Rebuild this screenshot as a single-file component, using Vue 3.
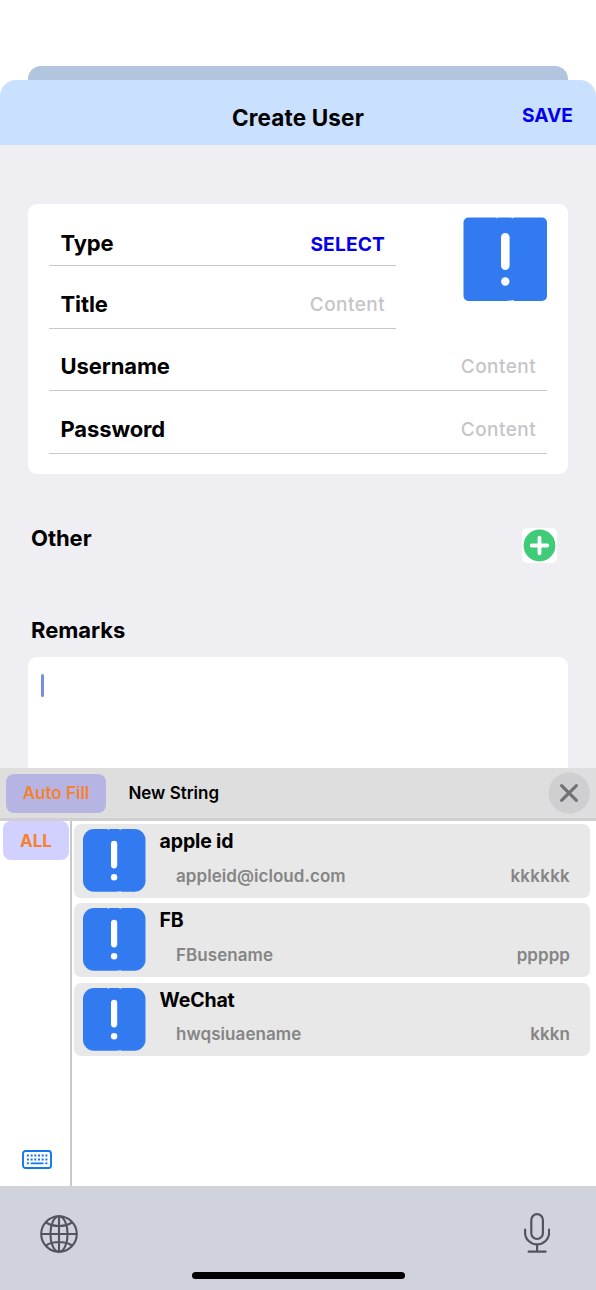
<script setup>
const shortRows = [
  { label: 'Type', value: 'SELECT', kind: 'select', cls: 'l-type' },
  { label: 'Title', value: 'Content', kind: 'hint', cls: 'l-title' },
]
const longRows = [
  { label: 'Username', value: 'Content', kind: 'hint', cls: 'l-user' },
  { label: 'Password', value: 'Content', kind: 'hint', cls: 'l-pass' },
]
const accounts = [
  { name: 'apple id', user: 'appleid@icloud.com', pass: 'kkkkkk' },
  { name: 'FB', user: 'FBusename', pass: 'ppppp' },
  { name: 'WeChat', user: 'hwqsiuaename', pass: 'kkkn' },
]
const keyCols = [0, 1, 2, 3, 4, 5]
</script>

<template>
  <div class="screen">
    <div class="back-sheet"></div>
    <header class="bar">
      <span class="side"></span>
      <h1>Create User</h1>
      <button class="save">SAVE</button>
    </header>

    <main class="form">
      <section class="card">
        <div class="top">
          <div class="short">
            <div v-for="r in shortRows" :key="r.label" class="row">
              <span class="label" :class="r.cls">{{ r.label }}</span>
              <span :class="r.kind">{{ r.value }}</span>
            </div>
          </div>
          <svg class="type-icon" viewBox="0 0 84 84">
            <rect x=".5" y=".5" width="83.5" height="83.5" rx="5" fill="#327af0" />
            <rect x="38" y="15.9" width="8.6" height="37" rx="4.3" fill="#fff" />
            <circle cx="42.3" cy="64.5" r="4.2" fill="#fff" />
            <path d="M32.5 0h2.5l-1 1.6zM47.5 0h4l-1.5 1.4zM43 84l8-1v1z" fill="#dbe8fd" />
          </svg>
        </div>
        <div v-for="r in longRows" :key="r.label" class="row">
          <span class="label" :class="r.cls">{{ r.label }}</span>
          <span :class="r.kind">{{ r.value }}</span>
        </div>
      </section>

      <div class="other">
        <h2 class="h-other">Other</h2>
        <svg class="add" viewBox="0 0 35 35">
          <rect width="35" height="35" rx="5" fill="#fff" />
          <circle cx="17.5" cy="17.5" r="15.9" fill="#3fcb77" />
          <path d="M17.5 9.7v15.6M9.7 17.5h15.6" stroke="#fff" stroke-width="3.8" stroke-linecap="round" />
        </svg>
      </div>
      <h2 class="h-remarks">Remarks</h2>
      <div class="remarks"><span class="caret"></span></div>
    </main>

    <nav class="tabs">
      <button class="tab active">Auto Fill</button>
      <button class="tab">New String</button>
      <svg class="close" viewBox="0 0 42 42">
        <circle cx="21.2" cy="21" r="20.7" fill="#cfcfd2" />
        <path d="M13.6 13.6l14.8 14.8M28.4 13.6L13.6 28.4" stroke="#717175" stroke-width="3.1" stroke-linecap="round" />
      </svg>
    </nav>

    <div class="panel">
      <aside class="rail">
        <button class="all">ALL</button>
        <svg class="keys" viewBox="0 0 30 19">
          <rect x="1" y="1" width="28" height="17" rx="2.6" fill="none" stroke="#1377ec" stroke-width="1.9" />
          <g fill="#1377ec">
            <rect v-for="c in keyCols" :key="'a' + c" :x="4.9 + c * 3.7" y="4.5" width="2" height="2" />
            <rect v-for="c in keyCols" :key="'b' + c" :x="4.9 + c * 3.7" y="8.5" width="2" height="2" />
            <rect x="4.9" y="12.3" width="2" height="2" />
            <rect x="8.6" y="12.4" width="13" height="1.9" rx=".6" />
            <rect x="23.4" y="12.3" width="2" height="2" />
          </g>
        </svg>
      </aside>
      <div class="list">
        <article v-for="(a, i) in accounts" :key="a.name" class="item">
          <svg class="item-icon" viewBox="0 0 63 63">
            <rect width="62.5" height="62.7" rx="11" fill="#327af0" />
            <rect x="28" y="11.8" width="6.2" height="27.6" rx="3.1" fill="#fff" />
            <circle cx="31.1" cy="48.2" r="3.2" fill="#fff" />
            <path d="M24.4 0h2l-.8 1.2zM35.6 0h3l-1.1 1zM33 63l5-1v1z" fill="#c6d9f8" />
          </svg>
          <div class="info">
            <div class="name" :class="'n' + i">{{ a.name }}</div>
            <div class="cred">
              <span :class="'u' + i">{{ a.user }}</span>
              <span :class="'p' + i">{{ a.pass }}</span>
            </div>
          </div>
        </article>
      </div>
    </div>

    <footer class="dock">
      <div class="dock-icons">
        <svg class="globe" viewBox="0 0 38 38" fill="none" stroke="#50555c" stroke-width="2.1">
          <circle cx="19" cy="19" r="17.8" />
          <ellipse cx="19" cy="19" rx="8.6" ry="17.8" />
          <path d="M19 1.2v35.6M1.2 19h35.6M6 7.5c7 4.6 19 4.6 26 0M6 30.5c7-4.6 19-4.6 26 0" />
        </svg>
        <svg class="mic" viewBox="0 0 26 40" fill="none" stroke="#50555c" stroke-width="2.2" stroke-linecap="round">
          <rect x="7.3" y="1.2" width="11.6" height="24.8" rx="5.8" />
          <path d="M1.1 16.5v3.2c0 6.6 5.4 11.6 12 11.6s12-5 12-11.6v-3.2M13.1 31.3v7.2M4.6 38.6h17" />
        </svg>
      </div>
      <div class="home"></div>
    </footer>
  </div>
</template>

<style>
body { margin: 0; background: #fff; }
</style>

<style scoped>
* { box-sizing: border-box; }
.screen {
  width: 596px; height: 1290px; overflow: hidden; background: #fff; color: #000;
  font-family: Inter, "Liberation Sans", sans-serif; display: flex; flex-direction: column;
  padding-top: 66px;
}
h1, h2 { margin: 0; }
button { border: 0; margin: 0; padding: 0; background: none; font-family: inherit; color: inherit; }
span, h1, h2, button, .name { white-space: nowrap; }
.back-sheet { flex: none; height: 14px; margin: 0 28px; border-radius: 13px 13px 0 0; background: #b1c5df; }
.bar {
  flex: none; height: 65px; background: #cae0ff; border-radius: 16px 16px 0 0;
  display: grid; grid-template-columns: 1fr auto 1fr; padding: 0 23px;
}
.bar h1 { font-size: 22.5px; line-height: 28px; font-weight: 700; padding-top: 24px; letter-spacing: 0.15px; }
.save { justify-self: end; align-self: start; margin-top: 22.6px; line-height: 24px; font-size: 19.2px; font-weight: 700; color: #0500ea; }
.form { flex: none; height: 623px; background: #efeef3; padding: 59px 28px 0; overflow: hidden; }
.card { height: 270px; border-radius: 9px; background: #fff; padding: 0 21px; }
.top { display: flex; justify-content: space-between; }
.short { width: 347px; }
.type-icon { width: 84px; height: 84px; margin-top: 13px; }
.row {
  height: 62.6px; border-bottom: 1.5px solid #c8c8ca; display: flex; align-items: flex-end;
  justify-content: space-between; padding: 0 11px 9px 11.5px; line-height: 28px;
}
.short .row:first-child { height: 62px; padding-bottom: 7px; }
.label { font-size: 22px; font-weight: 700; letter-spacing: -0.12px; position: relative; top: -1px; }
.label.l-type { top: -1px; }
.select { font-size: 19.2px; font-weight: 700; letter-spacing: 0.15px; color: #0500ea; }
.hint { font-size: 19px; font-weight: 500; letter-spacing: 0.45px; margin-right: -0.1px; color: #c5c5c7; }
.other { display: flex; justify-content: space-between; padding: 54px 11px 0 3px; height: 127px; }
h2 { font-size: 22px; line-height: 28px; font-weight: 700; letter-spacing: -0.05px; }
.h-other { margin-top: -3.6px; }
.add { width: 35px; height: 35px; }
.h-remarks { padding-left: 3px; margin-top: 15.4px; }
.remarks { margin-top: 12.6px; height: 130px; background: #fff; border-radius: 9px 9px 0 0; padding: 17px 12.5px; }
.caret { display: block; width: 3px; height: 23px; border-radius: 1.5px; background: #758fe0; }
.tabs {
  flex: none; height: 53px; background: #dedede; border-bottom: 3px solid #cfcfd1;
  display: flex; align-items: center; padding: 0 6px;
}
.tab { height: 39px; font-size: 17px; font-weight: 600; padding: 0 22.4px; }
.tab.active { width: 100px; padding: 0; background: #b5b4e3; color: #f5822e; border-radius: 8px; }
.close { width: 42px; height: 42px; margin-left: auto; }
.panel { flex: none; height: 364.5px; display: flex; }
.rail {
  width: 72px; border-right: 2px solid #c8c8ca; display: flex; flex-direction: column;
  justify-content: space-between; padding: 0 1px 17px 3px;
}
.all { width: 66px; height: 39px; border-radius: 8px; background: #d1d0ff; color: #f5822e; font-size: 17px; font-weight: 700; }
.keys { width: 30px; height: 19px; margin-left: 19px; }
.list { flex: 1; padding: 3px 6px 0 2.4px; display: flex; flex-direction: column; gap: 5.7px; }
.item { height: 73.6px; flex: none; border-radius: 7px; background: #e8e8e8; display: flex; padding: 5px 20px 0 8.6px; }
.item-icon { width: 63px; height: 63px; flex: none; }
.info { flex: 1; padding-left: 13.6px; }
.name { font-size: 19.5px; font-weight: 700; line-height: 24px; letter-spacing: -0.15px; }
.cred { display: flex; justify-content: space-between; padding-left: 16.4px; margin-top: 11.7px; line-height: 22px; font-size: 17px; font-weight: 600; color: #858585; letter-spacing: 0.06px; }
.p0 { letter-spacing: 0.25px; }
.dock { flex: 1; background: #d0d3db; display: flex; flex-direction: column; align-items: center; padding-bottom: 11px; justify-content: space-between; }
.dock-icons { width: 100%; display: flex; justify-content: space-between; padding: 27px 46px 0 40px; }
.globe { width: 38px; height: 38px; margin-top: 2px; }
.mic { width: 26px; height: 40px; }
.home { width: 213px; height: 7px; border-radius: 4px; background: #000; }
</style>
